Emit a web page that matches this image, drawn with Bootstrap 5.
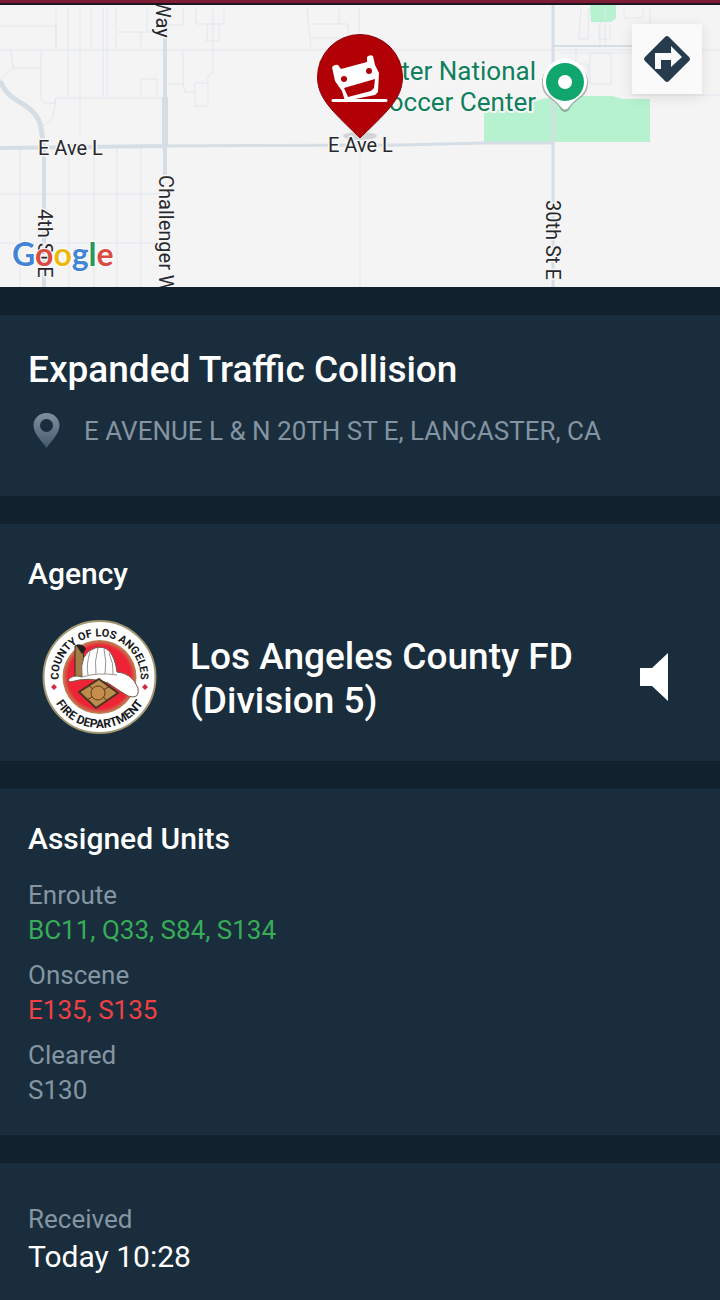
<!DOCTYPE html>
<html lang="en">
<head>
<meta charset="utf-8">
<meta name="viewport" content="width=device-width, initial-scale=1">
<title>Incident details</title>
<link href="https://cdn.jsdelivr.net/npm/bootstrap@5.3.0/dist/css/bootstrap.min.css" rel="stylesheet">
<style>
  body { background: #11212d; color: #fff; font-family: Roboto, "Liberation Sans", sans-serif; }
  .status-strip { height: 5px; background: #7c1d35; border-bottom: 2px solid #1d1420; }
  .map-area { background: #f4f4f5; }
  .map-canvas { height: 282px; width: 100%; }
  .road { fill: none; stroke: #d5dee5; }
  .parcel { fill: none; stroke: #e1e7ec; stroke-width: 1; }
  .map-label { font: 400 20px Roboto, sans-serif; fill: #27282c; stroke: #f6f6f7; stroke-width: 3px; paint-order: stroke; stroke-linejoin: round; }
  .poi-label { font: 400 26px Roboto, sans-serif; fill: #0f7f5c; stroke: #f6f6f7; stroke-width: 4px; paint-order: stroke; stroke-linejoin: round; text-anchor: end; }
  .brand-label { font: 700 32px Lato, sans-serif; stroke: #fff; stroke-width: 2px; paint-order: stroke; }
  .directions { top: 19px; right: 18px; width: 70px; height: 70px; background: #fafafa; box-shadow: 0 3px 12px rgba(0,0,0,.1); }
  .panels { gap: 28px; padding-top: 28px; }
  .panel { background: #192d3d; padding: 32px 28px 27px; }
  .panel-incident { padding-bottom: 47px; }
  .panel-times { padding-top: 39px; }
  .title { font-size: 37px; line-height: 46px; font-weight: 500; }
  .agency-name { font-size: 37px; line-height: 44px; font-weight: 500; padding-top: 4px; }
  .heading { font-size: 30px; line-height: 36px; font-weight: 500; }
  .address { font-size: 26px; line-height: 36px; gap: 20px; margin-top: 20px; color: #8494a1; }
  .agency-row { margin-top: 28px; gap: 33px; padding-left: 14px; }
  .units { font-size: 26px; line-height: 35px; gap: 10px; margin-top: 21px; }
  .muted-text { color: #8595a1; }
  .enroute { color: #37ac57; }
  .onscene { color: #ef4044; }
  .time-label { font-size: 26px; line-height: 35px; }
  .time-value { font-size: 30px; line-height: 40px; }
  .seal-text { font: 700 11px Roboto, sans-serif; fill: #171a20; text-anchor: middle; }
  .seal-text-lower { font-size: 12px; }
</style>
</head>
<body>
<div class="status-strip"></div>
<header class="map-area position-relative overflow-hidden">
  <svg class="map-canvas d-block" viewBox="0 5 720 282" preserveAspectRatio="xMidYMid slice" role="img" aria-label="Map of the incident at E Ave L">
    <!-- parks -->
    <path fill="#b7f2d0" d="M484 113L555 96H612L623 99H650V142H484ZM590 5H616V18L611 22H591Z"/>
    <!-- parcel outlines -->
    <path class="parcel" d="M0 26H56V48M56 8V48M0 50H720M68 8V97M80 8V136M91 8V48M103 8V97M107 8V97M116 8V48M117 32H160M141 32V48M147 8V32M11 50L13 68L0 79M13 68H41M41 50V99L44 103H55L56 98H165M56 98L53 117L43 126M141 97V79H157V97M167 25H183V8M196 8V24H224V8M213 8V73L208 76V106H195V83H208M207 25V41H219V25M168 84H183V50M183 84L185 92H195"/>
    <path class="parcel" d="M20 149V287M69 149V287M94 149V287M117 149V287M141 149V287M0 194H165M0 243H165M360 145V287M307 8L311 47M311 24H348V38H311M339 8V24M359 8V48"/>
    <path class="parcel" d="M581 8L579 39H588L589 8M599 25V39H610V24M624 8V18H643V8M650 8V96M576 48V64M560 53H630M590 53H611V84H590ZM560 64H588V84M605 8V48M630 95H720M600 22V48" />
    <!-- streets -->
    <path class="road" stroke-width="4" d="M0 148L165 146M165 5V175M44 149V287"/>
    <path class="road" stroke-width="3" d="M165 146L400 145L484 143H553M553 5V287"/>
    <path class="road" stroke-width="6" d="M165 97V146"/>
    <path class="road" stroke-width="2" d="M553 46H650"/>
    <path class="road" stroke-width="5" d="M0 81C8 98 16 99 26 106C40 116 42 124 43 147"/>
    <text class="map-label" x="38" y="155">E Ave L</text>
    <text class="map-label" transform="translate(156 0) rotate(90)">Way</text>
    <text class="map-label" transform="translate(159 175) rotate(90)">Challenger Way</text>
    <text class="map-label" transform="translate(38 209) rotate(90)">4th St E</text>
    <text class="map-label" transform="translate(546 200) rotate(90)">30th St E</text>
    <text class="poi-label" x="536" y="80">Lancaster National</text>
    <text class="poi-label" x="536" y="111">Soccer Center</text>
    <text class="brand-label" x="12" y="266"><tspan fill="#4285d4">G</tspan><tspan fill="#dc4a43">o</tspan><tspan fill="#eab90f">o</tspan><tspan fill="#4285d4">g</tspan><tspan fill="#26985a">l</tspan><tspan fill="#dc4a43">e</tspan></text>
    <!-- place marker -->
    <path fill="#777" opacity=".55" d="M565 61C552 61 542 70 542 83C542 99 556 98 561 110Q565 114 569 110C574 98 588 99 588 83C588 70 578 61 565 61Z"/>
    <path fill="#fff" d="M565 59C552 59 543 69 543 81C543 96 555 98 561 107Q565 112 569 107C575 98 587 96 587 81C587 69 578 59 565 59Z"/>
    <circle cx="565" cy="82" r="19" fill="#10a66d"/><circle cx="565" cy="82" r="7" fill="#fff"/>
    <!-- incident marker: overturned car -->
    <ellipse cx="360" cy="136" rx="17" ry="4" fill="#555" opacity=".2"/>
    <path fill="#b20007" stroke="#8d0509" stroke-width="1" d="M360 138C351 129 342 121 334 112C324 101 317.500 91 317.500 77A42.500 42.500 0 0 1 402.500 77C402.500 91 396 101 386 112C378 121 369 129 360 138Z"/>
    <path fill="#fff" d="M332 67Q335 64 338 65L341 69L367 62L367 57Q370 54 373 56L375 65L379 73L378 92L375 95L345 101L342 91L335 81Z"/>
    <path fill="#b20007" d="M344 88L375 79L374 88L371 91L348 97Z"/>
    <circle cx="344" cy="79" r="3" fill="#b20007"/><circle cx="369" cy="71" r="3" fill="#b20007"/>
    <path stroke="#fff" stroke-width="3" stroke-linecap="round" d="M333 100.500H386"/>
    <text class="map-label" x="328" y="152">E Ave L</text>
  </svg>
  <button type="button" class="directions btn border-0 rounded-0 p-0 position-absolute d-flex align-items-center justify-content-center" aria-label="Directions">
    <svg width="48" height="48" viewBox="0 0 48 48"><path fill="#263b4e" d="M22 2Q24 0 26 2L46 22Q48 24 46 26L26 46Q24 48 22 46L2 26Q0 24 2 22Z"/><path fill="#fafafa" d="M12 34V18H28V11L39 22L28 32V25H18V34Z"/></svg>
  </button>
</header>

<main class="panels d-flex flex-column">
  <section class="panel panel-incident">
    <h1 class="title mb-0">Expanded Traffic Collision</h1>
    <div class="address d-flex align-items-center">
      <svg class="flex-shrink-0" width="36" height="36" viewBox="0 0 36 36" aria-hidden="true">
        <defs><linearGradient id="pinShade" x2="0" y2="1"><stop stop-color="#8090a0"/><stop offset="1" stop-color="#445a6c"/></linearGradient></defs>
        <path fill="url(#pinShade)" fill-rule="evenodd" d="M18.500 0C11 0 5.500 5.500 5.500 12.500C5.500 21 14 28 18.500 35C23 28 31.500 21 31.500 12.500C31.500 5.500 26 0 18.500 0ZM18.500 6A6.500 6.500 0 1 1 18.500 19A6.500 6.500 0 1 1 18.500 6Z"/>
      </svg>
      <span>E AVENUE L &amp; N 20TH ST E, LANCASTER, CA</span>
    </div>
  </section>

  <section class="panel">
    <h2 class="heading mb-0">Agency</h2>
    <div class="agency-row d-flex align-items-center">
      <svg class="flex-shrink-0" width="115" height="114" viewBox="0 0 115 114" role="img" aria-label="County of Los Angeles Fire Department seal">
        <defs>
          <path id="arcTop" d="M22 78A41 41 0 1 1 93 78"/>
          <path id="arcBottom" d="M6.500 57A51 51 0 0 0 108.500 57"/>
          <radialGradient id="core"><stop offset=".85" stop-color="#ee2336"/><stop offset="1" stop-color="#b98a55"/></radialGradient>
        </defs>
        <circle cx="57.500" cy="57" r="56" fill="#fff" stroke="#a39772" stroke-width="2"/>
        <circle cx="57.500" cy="57" r="37" fill="url(#core)"/>
        <text class="seal-text"><textPath href="#arcTop" startOffset="50%">COUNTY OF LOS ANGELES</textPath></text>
        <text class="seal-text seal-text-lower"><textPath href="#arcBottom" startOffset="50%">FIRE DEPARTMENT</textPath></text>
        <path fill="#d22a44" d="M12 64L15 67L12 70L9 67ZM103 64L106 67L103 70L100 67Z"/>
        <path fill="#a47c45" stroke="#342c26" d="M33 26Q38 23 42 29L40 58L33 57Z"/><path fill="#241f20" d="M34 25Q41 23 44 29L40 34Z"/>
        <path fill="#fff" stroke="#725b4c" d="M26 60Q31 54 40 57Q37 33 53 28Q71 23 75 52Q90 53 96 68Q98 80 86 76Q76 70 66 63Q48 56 28 62Z"/>
        <path fill="none" stroke="#9a938e" d="M40 57Q57 52 75 55M48 32Q44 45 46 55M56 28Q52 42 54 54M62 29Q65 42 63 54M67 33Q72 44 71 54"/>
        <path fill="#bd8e4b" stroke="#4b3422" stroke-width="2" d="M57 59L76 73L54 88L37 72Z"/>
        <path stroke="#4b3422" d="M46 65L66 81M68 66L45 80"/><circle cx="56" cy="73" r="7" fill="#c78e4b" stroke="#5b3b20"/>
      </svg>
      <div class="agency-name flex-grow-1">Los Angeles County FD (Division 5)</div>
      <button type="button" class="btn border-0 rounded-0 p-0 me-4 flex-shrink-0" aria-label="Listen">
        <svg class="d-block" width="28" height="48" viewBox="0 0 28 48"><path fill="#fff" d="M0 15H12L28 0V48L12 33H0Z"/></svg>
      </button>
    </div>
  </section>

  <section class="panel">
    <h2 class="heading mb-0">Assigned Units</h2>
    <dl class="units d-flex flex-column mb-0">
      <div><dt class="fw-normal muted-text">Enroute</dt><dd class="mb-0 enroute">BC11, Q33, S84, S134</dd></div>
      <div><dt class="fw-normal muted-text">Onscene</dt><dd class="mb-0 onscene">E135, S135</dd></div>
      <div><dt class="fw-normal muted-text">Cleared</dt><dd class="mb-0 muted-text">S130</dd></div>
    </dl>
  </section>

  <section class="panel panel-times">
    <div class="time-label muted-text">Received</div>
    <div class="time-value">Today 10:28</div>
  </section>
</main>
<script src="https://cdn.jsdelivr.net/npm/bootstrap@5.3.0/dist/js/bootstrap.bundle.min.js"></script>
</body>
</html>
